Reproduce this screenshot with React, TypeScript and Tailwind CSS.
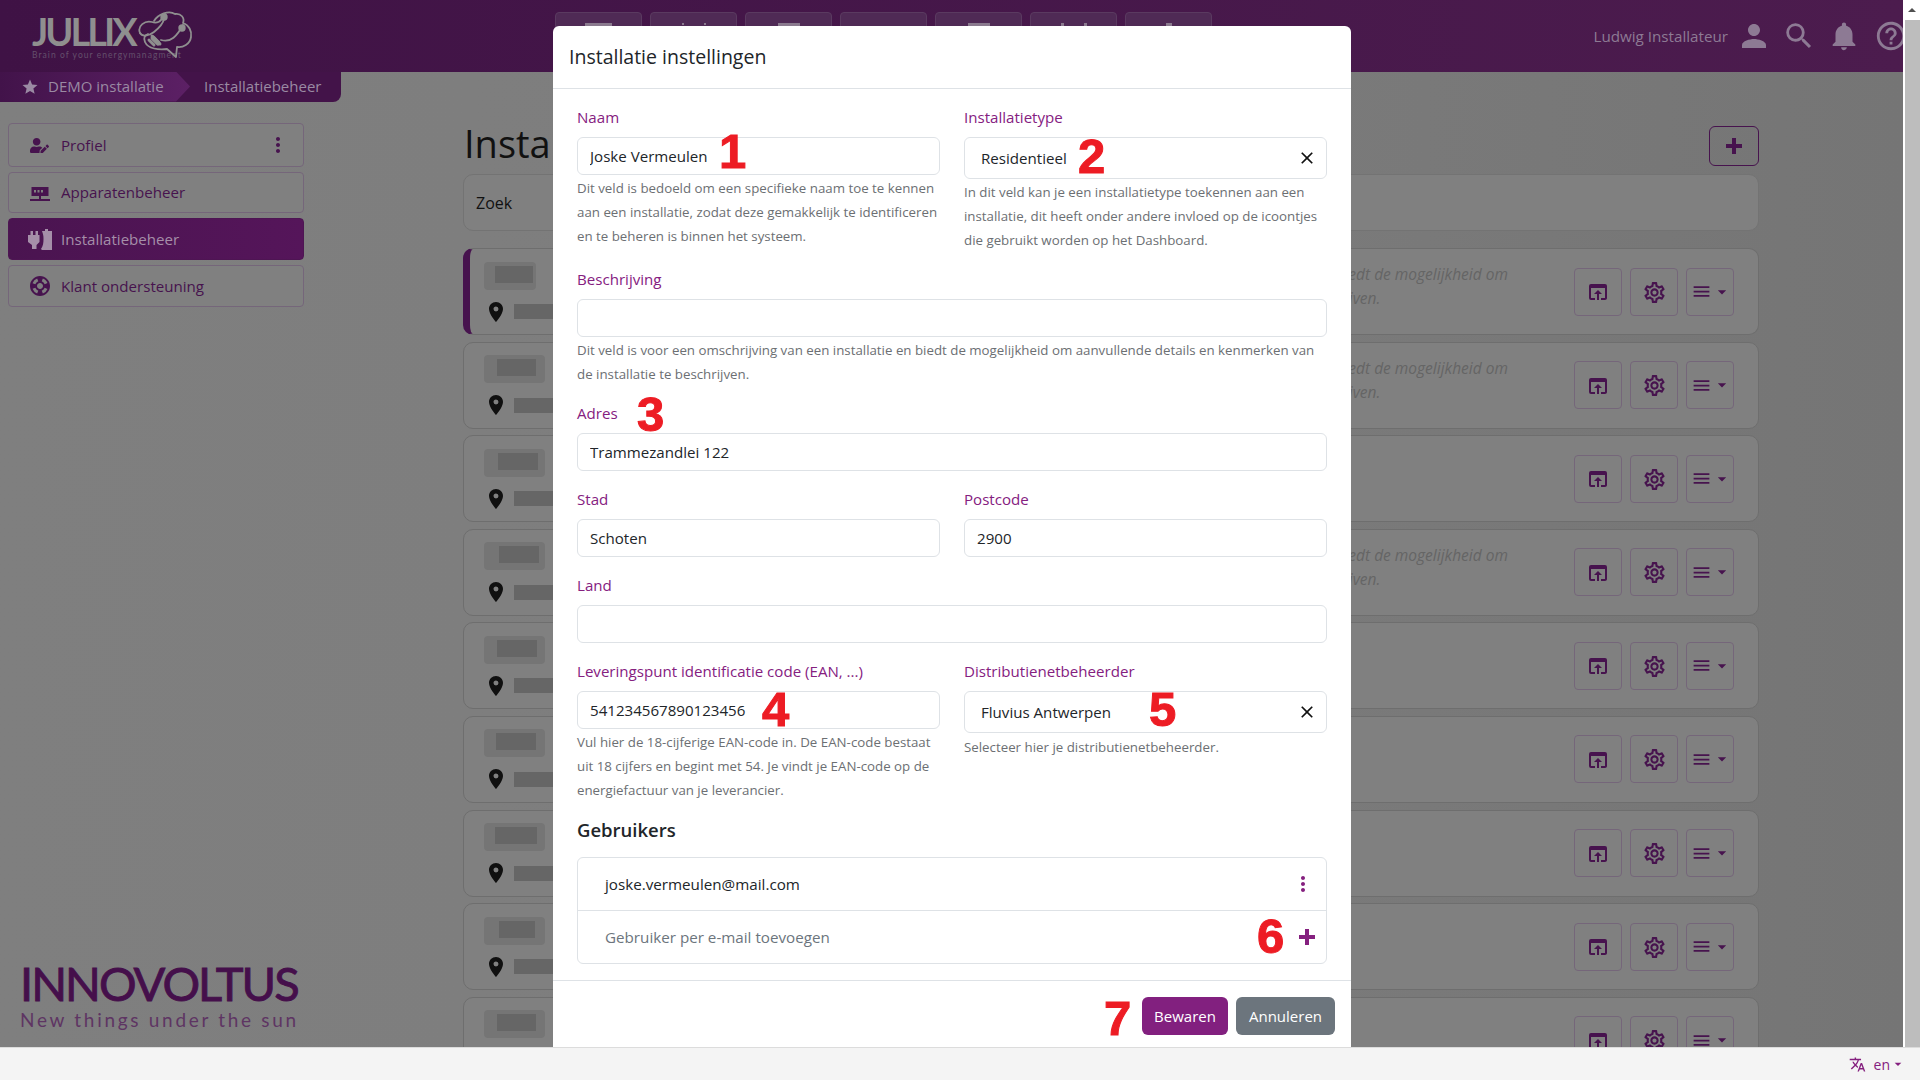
import {
  MdPerson,
  MdSearch,
  MdNotifications,
  MdHelpOutline,
  MdStar,
  MdMoreVert,
  MdSupport,
  MdPlace,
  MdOpenInBrowser,
  MdOutlineSettings,
  MdMenu,
  MdArrowDropDown,
  MdClose,
  MdTranslate,
} from "react-icons/md";
import { FaUserEdit } from "react-icons/fa";

const chips = [
  { chip: 52, inner: 38, innerLeft: 11, bar: 44, active: true, text: true },
  { chip: 61, inner: 39, innerLeft: 13, bar: 42, text: true },
  { chip: 61, inner: 40, innerLeft: 14, bar: 44 },
  { chip: 61, inner: 40, innerLeft: 15, bar: 44, text: true },
  { chip: 61, inner: 40, innerLeft: 13, bar: 44 },
  { chip: 61, inner: 40, innerLeft: 12, bar: 44 },
  { chip: 61, inner: 42, innerLeft: 11, bar: 44 },
  { chip: 61, inner: 36, innerLeft: 15, bar: 44 },
  { chip: 61, inner: 39, innerLeft: 13, bar: 44 },
];

// what is left visible of each nav icon above the modal
const tabTips = [
  [{ w: 27, h: 4 }],
  [{ w: 2, h: 2 }, { w: 2, h: 2 }],
  [{ w: 22, h: 4 }],
  [],
  [{ w: 22, h: 3 }],
  [{ w: 3, h: 4 }, { w: 3, h: 4 }],
  [{ w: 6, h: 5 }],
];

function Label({ children }: { children: React.ReactNode }) {
  return <div className="h-6 text-[15.1px] leading-[22px] text-[#85207f] mb-[7px]">{children}</div>;
}

function Help({ children }: { children: React.ReactNode }) {
  return <p className="text-[13.3px] leading-6 text-[#6c6f73]">{children}</p>;
}

function TextInput({ value }: { value?: string }) {
  return (
    <input
      readOnly
      value={value ?? ""}
      className="block w-full h-[38px] bg-white border border-[#dee2e6] rounded-md px-3 text-[15.1px] text-[#212529] outline-none"
    />
  );
}

function SelectBox({ value }: { value: string }) {
  return (
    <div className="flex items-center justify-between h-[42px] border border-[#dee2e6] rounded-md pl-4 pr-[9px] text-[15.1px] text-[#212529]">
      <span>{value}</span>
      <MdClose size={20} className="text-[#111]" />
    </div>
  );
}

function PlusIcon({ className }: { className?: string }) {
  return (
    <svg className={className} width="16" height="16" viewBox="0 0 16 16" fill="currentColor">
      <path d="M6 0h4v6h6v4h-6v6H6v-6H0V6h6z" />
    </svg>
  );
}

// red numbers that were put on top of the screenshot
function Mark({ n, className }: { n: number; className: string }) {
  return (
    <span
      className={`absolute z-10 font-['Liberation_Sans',sans-serif] font-bold text-[49px] leading-none text-[#ed1c24] [-webkit-text-stroke:1px_#ed1c24] ${className}`}
    >
      {n}
    </span>
  );
}

function Logo() {
  return (
    <div className="relative w-[200px] h-[72px] ml-8 shrink-0">
      <div className="pt-[12px] font-['Lato',sans-serif] font-bold text-[38px] leading-[38px] tracking-[-3px] text-[#8f8f8f]">
        JULLIX
      </div>
      <div className="text-[8.5px] leading-[10px] tracking-[1.05px] text-[#64506c] font-['Lato',sans-serif]">
        Brain of your energymanagment
      </div>
      <svg
        className="absolute left-[105px] top-[10px]"
        width="56"
        height="48"
        viewBox="0 0 56 48"
        fill="none"
        stroke="#8f8f8f"
        strokeWidth="1.8"
        strokeLinecap="round"
        strokeLinejoin="round"
      >
        <path d="M17 11C21 4 32 0 38 4C44 3 48 8 46 13C52 15 55 21 54 27C53 34 46 38 40 37L39 47L30 39C22 40 11 39 8 32C6 28 8 25 11 24" />
        <path d="M3 23C0 16 8 10 15 12C20 14 25 11 25 7" />
        <path d="M3 23C5 27 12 26 17 22C22 18 26 14 27 9" />
        <circle cx="27" cy="7" r="2.8" fill="#8f8f8f" />
        <path d="M46 15C40 26 34 33 24 30" />
        <circle cx="45" cy="18" r="2.8" fill="#8f8f8f" />
        <path d="M15 26L23 34M12 30L17 35" strokeWidth="3" />
        <path d="M16 28L21 33" strokeWidth="5" />
      </svg>
    </div>
  );
}

function ServerIcon({ className }: { className?: string }) {
  return (
    <svg className={className} width="20" height="15" viewBox="0 0 20 15" fill="currentColor">
      <path d="M1.5 0H18.5v9H11v3h9v2H0v-2h9V9H1.5zM4 3v2.5h2V3zm3.5 0v2.5h2V3zm3.5 0v2.5h2V3z" fillRule="evenodd" />
    </svg>
  );
}

function PlugIcon({ className }: { className?: string }) {
  return (
    <svg className={className} width="24" height="21" viewBox="0 0 24 21" fill="currentColor">
      <path d="M2.5 2h2.5v4h2.5V2H10v4h1.5v7l-3 3v4H4v-4L0 13V6h2.5zM14 2h3V0h3v2h4v19h-10l-1-1c2-3 2.5-6 2.5-10S15 5 14 2z" />
    </svg>
  );
}

function SideItem({
  icon,
  label,
  active,
  height,
  kebab,
}: {
  icon: React.ReactNode;
  label: string;
  active?: boolean;
  height: string;
  kebab?: boolean;
}) {
  return (
    <div
      className={`flex items-center border rounded pr-[15px] text-[15.1px] ${height} ${
        active
          ? "border-[#4e1553] bg-gradient-to-r from-[#4a1450] to-[#55155a] text-[#a58fa9]"
          : "border-[#75667a] bg-[#808080] text-[#47134e]"
      }`}
    >
      <div className="w-[52px] flex justify-center pl-[9px] shrink-0">{icon}</div>
      <span>{label}</span>
      {kebab && <MdMoreVert size={24} className="ml-auto -mr-[2px] text-[#47134e]" />}
    </div>
  );
}

function ActionButton({ children }: { children: React.ReactNode }) {
  return (
    <div className="flex items-center justify-center w-12 h-[48px] border border-[#75667a] rounded text-[#47134e]">
      {children}
    </div>
  );
}

function InstallRow({ row }: { row: (typeof chips)[number] }) {
  return (
    <div
      className={`relative flex items-center shrink-0 h-[87px] border border-[#6e6e6e] rounded-[10px] bg-[#808080] overflow-hidden pr-6 ${
        row.active ? "border-l-[7px] border-l-[#47134e]" : ""
      }`}
    >
      <div className={`shrink-0 flex flex-col gap-3 ${row.active ? "w-[464px] pl-[14px]" : "w-[470px] pl-[20px]"}`}>
        <div className="h-7 bg-[#757575] rounded" style={{ width: row.chip }}>
          <div
            className="h-[17px] bg-[#666] relative top-1"
            style={{ width: row.inner, marginLeft: row.innerLeft }}
          />
        </div>
        <div className="flex items-center h-5">
          <MdPlace size={24} className="text-[#101010] shrink-0" />
          <div className="h-[15px] bg-[#666] ml-[6px]" style={{ width: row.bar }} />
        </div>
      </div>
      <div className="flex-1 min-w-0 whitespace-nowrap italic text-[15.5px] leading-6 text-[#656565] pl-[29px] self-start pt-[13px]">
        {row.text && (
          <>
            <div>Dit veld is voor een omschrijving van een installatie en biedt de mogelijkheid om</div>
            <div className="-ml-[38px]">aanvullende details en kenmerken van de installatie te beschrijven.</div>
          </>
        )}
      </div>
      <div className="flex gap-2 shrink-0">
        <ActionButton>
          <MdOpenInBrowser size={24} className="mt-px" />
        </ActionButton>
        <ActionButton>
          <MdOutlineSettings size={25} className="mt-px" />
        </ActionButton>
        <ActionButton>
          <MdMenu size={21} className="-ml-0.5" />
          <MdArrowDropDown size={20} className="-mr-1" />
        </ActionButton>
      </div>
    </div>
  );
}

function Modal() {
  return (
    <div className="absolute left-[553px] top-[26px] bottom-0 w-[798px] flex flex-col bg-white rounded-t-md overflow-hidden font-['Open_Sans',sans-serif]">
      <div className="h-[63px] shrink-0 flex items-center px-4 border-b border-[#dee2e6] text-[19.5px] font-medium text-[#212529]">
        Installatie instellingen
      </div>
      <div className="relative flex-1 px-6 pt-[17px]">
        <div className="grid grid-cols-2 gap-x-6 h-[147px]">
          <div>
            <Label>Naam</Label>
            <TextInput value="Joske Vermeulen" />
            <div className="mt-px">
              <Help>Dit veld is bedoeld om een specifieke naam toe te kennen aan een installatie, zodat deze gemakkelijk te identificeren en te beheren is binnen het systeem.</Help>
            </div>
          </div>
          <div>
            <Label>Installatietype</Label>
            <SelectBox value="Residentieel" />
            <div className="mt-px">
              <Help>In dit veld kan je een installatietype toekennen aan een installatie, dit heeft onder andere invloed op de icoontjes die gebruikt worden op het Dashboard.</Help>
            </div>
          </div>
        </div>
        <div className="mt-[15px]">
          <Label>Beschrijving</Label>
          <TextInput />
          <div className="mt-px">
            <Help>Dit veld is voor een omschrijving van een installatie en biedt de mogelijkheid om aanvullende details en kenmerken van de installatie te beschrijven.</Help>
          </div>
        </div>
        <div className="mt-4">
          <Label>Adres</Label>
          <TextInput value="Trammezandlei 122" />
        </div>
        <div className="grid grid-cols-2 gap-x-6 mt-[17px]">
          <div>
            <Label>Stad</Label>
            <TextInput value="Schoten" />
          </div>
          <div>
            <Label>Postcode</Label>
            <TextInput value="2900" />
          </div>
        </div>
        <div className="mt-[17px]">
          <Label>Land</Label>
          <TextInput />
        </div>
        <div className="grid grid-cols-2 gap-x-6 mt-[17px] h-[142px]">
          <div>
            <Label>Leveringspunt identificatie code (EAN, ...)</Label>
            <TextInput value="541234567890123456" />
            <div className="mt-px">
              <Help>Vul hier de 18-cijferige EAN-code in. De EAN-code bestaat uit 18 cijfers en begint met 54. Je vindt je EAN-code op de energiefactuur van je leverancier.</Help>
            </div>
          </div>
          <div>
            <Label>Distributienetbeheerder</Label>
            <SelectBox value="Fluvius Antwerpen" />
            <div className="mt-0.5">
              <Help>Selecteer hier je distributienetbeheerder.</Help>
            </div>
          </div>
        </div>
        <h5 className="mt-4 h-6 text-[18.5px] leading-6 font-semibold text-[#212529]">Gebruikers</h5>
        <div className="mt-[15px] border border-[#dee2e6] rounded-md text-[15.2px]">
          <div className="flex items-center justify-between h-[53px] pl-[27px] pr-2 border-b border-[#dee2e6] text-[#212529]">
            <span>joske.vermeulen@mail.com</span>
            <MdMoreVert size={24} className="text-[#85207f] mr-[3px]" />
          </div>
          <div className="flex items-center justify-between h-[52px] pl-[27px] pr-[11px] text-[#6c757d]">
            <span>Gebruiker per e-mail toevoegen</span>
            <PlusIcon className="text-[#85207f]" />
          </div>
        </div>
      </div>
      <div className="h-[67px] shrink-0 flex items-start justify-end gap-2 pt-4 pr-4 border-t border-[#dee2e6] text-[15px]">
        <button className="w-[86px] h-[38px] rounded-md bg-[#82207f] text-white">Bewaren</button>
        <button className="w-[99px] h-[38px] rounded-md bg-[#6c757d] text-white">Annuleren</button>
      </div>

      <Mark n={1} className="left-[166px] top-[101px]" />
      <Mark n={2} className="left-[525px] top-[106px]" />
      <Mark n={3} className="left-[84px] top-[364px]" />
      <Mark n={4} className="left-[209px] top-[659px]" />
      <Mark n={5} className="left-[596px] top-[659px]" />
      <Mark n={6} className="left-[704px] top-[886px]" />
      <Mark n={7} className="left-[551px] top-[968px]" />
    </div>
  );
}

export default function App() {
  return (
    <div className="flex flex-col h-screen w-full overflow-hidden font-['Open_Sans',sans-serif]">
      <div className="flex flex-1 min-h-0">
        <div className="relative flex-1 min-w-0 flex flex-col overflow-hidden bg-gradient-to-r from-[#7f7f7f] via-[#7d7d7d] to-[#757575]">
          {/* Top bar */}
          <div className="flex h-[72px] shrink-0 bg-gradient-to-r from-[#3f1245] to-[#4c1c4e]">
            <Logo />
            <div className="flex gap-2 ml-[323px] pt-3">
              {tabTips.map((tips, i) => (
                <div
                  key={i}
                  className="flex justify-center gap-5 w-[87px] h-[50px] pt-[10px] rounded-t border border-[#5a3a60] bg-[#4f2a55]"
                >
                  {tips.map((tip, j) => (
                    <div key={j} className="bg-[#8a7a8e]" style={{ width: tip.w, height: tip.h }} />
                  ))}
                </div>
              ))}
            </div>
            <div className="ml-auto flex items-center text-[#8d7a94] -mr-[5px]">
              <span className="text-[15.2px] mr-2">Ludwig Installateur</span>
              <MdPerson size={36} />
              <MdSearch size={34} className="ml-[10px]" />
              <MdNotifications size={34} className="ml-[11px]" />
              <MdHelpOutline size={34} className="ml-[13px]" />
            </div>
          </div>

          <div className="flex flex-1 min-h-0">
            {/* Left column */}
            <div className="w-[463px] shrink-0 flex flex-col">
              <div className="flex w-[341px] h-[30px] items-center rounded-br-lg bg-[#431349] text-[#9a8aa3] text-[15px] pb-px">
                <div
                  className="flex items-center w-[190px] h-[30px] pl-[21px] bg-gradient-to-r from-[#42134a] to-[#5c2065]"
                  style={{ clipPath: "polygon(0 0, 176px 0, 190px 50%, 176px 100%, 0 100%)" }}
                >
                  <MdStar size={18} className="mr-[9px]" />
                  <span>DEMO installatie</span>
                </div>
                <span className="ml-[14px]">Installatiebeheer</span>
              </div>
              <div className="mt-[21px] ml-2 w-[296px] flex flex-col gap-[5px]">
                <SideItem height="h-11" kebab label="Profiel" icon={<FaUserEdit size={19} />} />
                <SideItem height="h-[41px]" label="Apparatenbeheer" icon={<ServerIcon className="mt-1" />} />
                <SideItem height="h-[42px]" active label="Installatiebeheer" icon={<PlugIcon />} />
                <SideItem height="h-[42px]" label="Klant ondersteuning" icon={<MdSupport size={24} />} />
              </div>
              <div className="mt-auto pl-5 pb-[15px] text-[#450f4b] font-['Lato',sans-serif]">
                <div className="text-[47px] leading-[50px] tracking-[-2px] [-webkit-text-stroke:0.9px_#450f4b]">INNOVOLTUS</div>
                <div className="text-[19px] leading-[24px] tracking-[2.7px] text-[#5e3563]">New things under the sun</div>
              </div>
            </div>

            {/* Main column */}
            <div className="w-[1296px] shrink-0 pt-[54px] overflow-hidden">
              <div className="flex items-start justify-between h-10">
                <h1 className="pl-px text-[38px] leading-[34px] font-medium text-[#111]">Installatiebeheer</h1>
                <div className="flex items-center justify-center w-[50px] h-10 border border-[#47134e] rounded-md text-[#47134e]">
                  <PlusIcon />
                </div>
              </div>
              <div className="flex items-center h-[57px] mt-2 border border-[#737373] rounded-[10px] bg-[#808080] pl-3 text-[16px] text-[#111]">
                Zoek
              </div>
              <div className="flex flex-col gap-[6.6px] mt-[17px]">
                {chips.map((row, i) => (
                  <InstallRow key={i} row={row} />
                ))}
              </div>
            </div>
          </div>

          <Modal />
        </div>

        {/* Page scrollbar */}
        <div className="w-[17px] shrink-0 bg-white flex flex-col">
          <div className="h-5 flex items-center justify-center">
            <div className="w-0 h-0 border-x-[4px] border-x-transparent border-b-[4px] border-b-[#505050]" />
          </div>
          <div className="flex-1 ml-0.5 bg-[#bdbdbd]" />
        </div>
      </div>

      {/* Language bar */}
      <div className="h-[33px] shrink-0 flex items-center justify-end gap-2 pr-[14px] bg-[#f4f4f4] border-t border-[#dcdcdc] text-[14px] text-[#85207f]">
        <MdTranslate size={17} />
        <span className="flex items-center">
          en
          <MdArrowDropDown size={16} />
        </span>
      </div>
    </div>
  );
}
